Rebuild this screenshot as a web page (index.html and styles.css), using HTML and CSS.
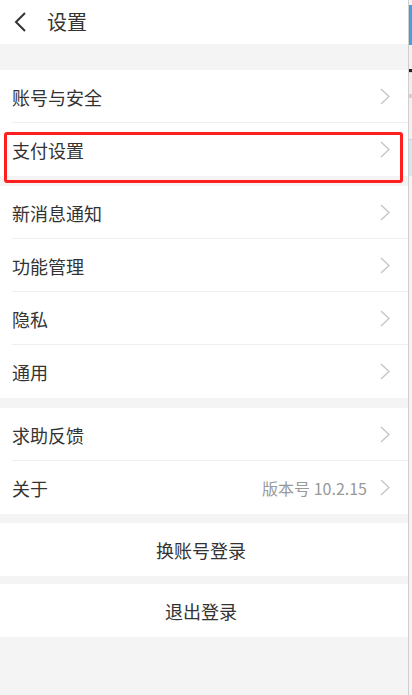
FILE: index.html
```html
<!DOCTYPE html>
<html lang="zh-CN">
<head>
<meta charset="utf-8">
<title>设置</title>
<link rel="stylesheet" href="styles.css">
</head>
<body>
<div class="page">
  <div class="main">
    <header class="header">
      <svg class="back" width="14" height="20" viewBox="0 0 14 20"><polyline points="12,1 3,10 12,19" fill="none" stroke="#333" stroke-width="2"/></svg>
      <span class="title">设置</span>
    </header>
    <div class="gap gap-top"></div>
    <div class="group">
      <div class="row"><span class="label">账号与安全</span><svg class="chev" width="10" height="17" viewBox="0 0 10 17"><polyline points="1,1 9,8.5 1,16" fill="none" stroke="#c6c6c6" stroke-width="1.4"/></svg></div>
      <div class="row last highlighted"><span class="label">支付设置</span><svg class="chev" width="10" height="17" viewBox="0 0 10 17"><polyline points="1,1 9,8.5 1,16" fill="none" stroke="#c6c6c6" stroke-width="1.4"/></svg><div class="redbox"></div></div>
    </div>
    <div class="gap"></div>
    <div class="group">
      <div class="row"><span class="label">新消息通知</span><svg class="chev" width="10" height="17" viewBox="0 0 10 17"><polyline points="1,1 9,8.5 1,16" fill="none" stroke="#c6c6c6" stroke-width="1.4"/></svg></div>
      <div class="row"><span class="label">功能管理</span><svg class="chev" width="10" height="17" viewBox="0 0 10 17"><polyline points="1,1 9,8.5 1,16" fill="none" stroke="#c6c6c6" stroke-width="1.4"/></svg></div>
      <div class="row"><span class="label">隐私</span><svg class="chev" width="10" height="17" viewBox="0 0 10 17"><polyline points="1,1 9,8.5 1,16" fill="none" stroke="#c6c6c6" stroke-width="1.4"/></svg></div>
      <div class="row last"><span class="label">通用</span><svg class="chev" width="10" height="17" viewBox="0 0 10 17"><polyline points="1,1 9,8.5 1,16" fill="none" stroke="#c6c6c6" stroke-width="1.4"/></svg></div>
    </div>
    <div class="gap"></div>
    <div class="group">
      <div class="row"><span class="label">求助反馈</span><svg class="chev" width="10" height="17" viewBox="0 0 10 17"><polyline points="1,1 9,8.5 1,16" fill="none" stroke="#c6c6c6" stroke-width="1.4"/></svg></div>
      <div class="row last"><span class="label">关于</span><span class="value">版本号 10.2.15</span><svg class="chev" width="10" height="17" viewBox="0 0 10 17"><polyline points="1,1 9,8.5 1,16" fill="none" stroke="#c6c6c6" stroke-width="1.4"/></svg></div>
    </div>
    <div class="gap gap-9"></div>
    <div class="button">换账号登录</div>
    <div class="gap gap-8"></div>
    <div class="button">退出登录</div>
  </div>
  <div class="edge">
    <div class="e-blue"></div>
    <div class="e-light"></div>
    <div class="e-dark"></div>
    <div class="e-light2"></div>
    <div class="e-pink"></div>
    <div class="e-light3"></div>
    <div class="e-sky"></div>
    <div class="e-rest"></div>
  </div>
</div>
</body>
</html>
```

FILE: styles.css
```css
* { box-sizing: border-box; }
html, body {
  margin: 0;
  padding: 0;
  background: #f4f4f4;
}
body {
  font-family: "Noto Sans CJK SC", "Noto Sans", sans-serif;
  color: #333;
  width: 412px;
  height: 695px;
  overflow: hidden;
}
.page {
  display: flex;
  height: 695px;
}
.main {
  width: 408px;
  display: flex;
  flex-direction: column;
  background: #f4f4f4;
}
.header {
  height: 44px;
  background: #fff;
  display: flex;
  align-items: center;
  padding-left: 13px;
}
.back { display: block; margin-top: 0; }
.title {
  margin-left: 20px;
  font-size: 20px;
  line-height: 1;
  color: #333;
}
.gap { height: 10px; }
.gap-top { height: 26px; }
.gap-9 { height: 9px; }
.gap-8 { height: 8px; }
.group { background: #fff; }
.row {
  position: relative;
  height: 53px;
  display: flex;
  align-items: center;
  padding-left: 12px;
  padding-right: 18px;
}
.row::after {
  content: "";
  position: absolute;
  left: 12px;
  right: 0;
  bottom: 0;
  height: 1px;
  background: #efefef;
}
.row.last::after { display: none; }
.label {
  flex: 1;
  font-size: 18px;
  line-height: 1;
  color: #333;
}
.value {
  font-size: 16px;
  color: #999;
  margin-right: 13px;
}
.chev { display: block; }
.redbox {
  position: absolute;
  left: 4px;
  top: 9px;
  width: 399px;
  height: 51px;
  border: 3px solid #ff1f1f;
  border-radius: 3px;
  pointer-events: none;
}
.button {
  height: 53px;
  background: #fff;
  display: flex;
  align-items: center;
  justify-content: center;
  padding-right: 6px;
  font-size: 18px;
  color: #333;
}
.edge {
  width: 4px;
  border-left: 1px solid #cfcfcf;
  display: flex;
  flex-direction: column;
  background: #f3f3f3;
}
.e-blue { height: 40px; margin-top: 5px; background: #4a9ee0; }
.e-light { height: 24px; background: #f1f1f1; }
.e-dark { height: 3px; background: #222; }
.e-light2 { height: 22px; background: #efefef; border-top: 1px solid #d5d5d5; }
.e-pink { height: 4px; background: #e9c6c6; }
.e-light3 { height: 42px; background: #f1f1f1; border-bottom: 1px solid #d0d0d0; }
.e-sky { height: 36px; background: #d3e8f2; }
.e-rest { flex: 1; background: #f4f4f4; }
```
